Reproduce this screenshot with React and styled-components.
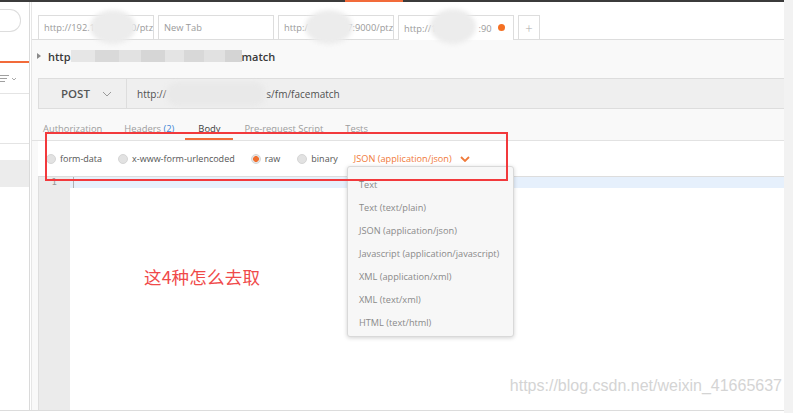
import React from 'react';
import styled, { createGlobalStyle } from 'styled-components';

const GlobalStyle = createGlobalStyle`
  html, body {
    margin: 0;
    padding: 0;
    background: #ffffff;
  }
  body {
    font-family: 'Open Sans', 'Noto Sans', sans-serif;
  }
`;

const ORANGE = '#f26b3a';

const Frame = styled.div`
  width: 793px;
  height: 413px;
  display: flex;
  overflow: hidden;
  background: #ffffff;
`;

const Window = styled.div`
  flex: 1;
  height: 410px;
  display: flex;
  flex-direction: column;
  border-bottom: 1px solid #dcdcdc;
`;

const TopStrip = styled.div`
  height: 2px;
  background: #3b3b3b;
  display: flex;
`;

const StripMark = styled.span`
  margin-left: 345px;
  width: 58px;
  background: ${ORANGE};
`;

const Columns = styled.div`
  flex: 1;
  display: flex;
  min-height: 0;
`;

const Scrollbar = styled.div`
  width: 9px;
  background: #f2f2f2;
`;

/* ---------- sidebar ---------- */

const Sidebar = styled.aside`
  width: 29px;
  border-right: 1px solid #dadada;
  margin-right: 1px;
  display: flex;
  flex-direction: column;
  background: #ffffff;
`;

const SearchPill = styled.div`
  margin-top: 7px;
  width: 20px;
  height: 21px;
  border: 1px solid #dddddd;
  border-left: none;
  border-radius: 0 11px 11px 0;
`;

const SideTabs = styled.div`
  height: 29px;
  border-bottom: 2px solid ${ORANGE};
`;

const SideFilter = styled.div`
  height: 30px;
  border-bottom: 1px solid #e4e4e4;
  display: flex;
  align-items: center;
`;

const SideBlock = styled.div`
  height: 49px;
  border-bottom: 1px solid #e4e4e4;
`;

const SideItem = styled.div`
  margin-top: 16px;
  height: 27px;
  background: ${(p) => (p.$selected ? '#ececec' : 'transparent')};
`;

/* ---------- main ---------- */

const Main = styled.main`
  flex: 1;
  display: flex;
  flex-direction: column;
  border-left: 1px solid #e6e6e6;
  background: #f9f9f9;
  min-width: 0;
`;

const TabBar = styled.div`
  position: relative;
  height: 38px;
  box-sizing: border-box;
  background: #ffffff;
  border-bottom: 1px solid #dddddd;
  display: flex;
  align-items: flex-end;
  gap: 4px;
  padding-left: 6px;
`;

const Tab = styled.div`
  position: relative;
  width: ${(p) => p.$w || 116}px;
  box-sizing: border-box;
  border: 1px solid #dddddd;
  border-bottom: none;
  background: #ffffff;
  margin-bottom: ${(p) => (p.$active ? '-1px' : '0')};
  height: ${(p) => (p.$active ? '25px' : '24px')};
  padding-left: ${(p) => (p.$center ? '0' : '5px')};
  display: flex;
  align-items: center;
  justify-content: ${(p) => (p.$center ? 'center' : 'flex-start')};
  font-size: 9.3px;
  color: #9a9a9a;
  white-space: nowrap;
  overflow: hidden;
`;

const Hidden = styled.span`
  display: inline-block;
  width: ${(p) => p.$w}px;
`;

const Dot = styled.span`
  position: absolute;
  right: 8px;
  top: 8px;
  width: 7px;
  height: 7px;
  border-radius: 50%;
  background: #f47023;
`;

const Plus = styled.span`
  font-size: 13px;
  color: #a8a8a8;
  font-weight: 300;
`;

const Smudge = styled.span`
  position: absolute;
  left: ${(p) => p.$x}px;
  top: ${(p) => p.$y}px;
  width: ${(p) => p.$w}px;
  height: ${(p) => p.$h}px;
  border-radius: 50%;
  background: #ececec;
  filter: blur(2px);
  z-index: 1;
`;

const Content = styled.div`
  position: relative;
  flex: 1;
  display: flex;
  flex-direction: column;
  min-height: 0;
`;

const TitleRow = styled.div`
  height: 38px;
  box-sizing: border-box;
  padding: 0 0 6px 5px;
  display: flex;
  align-items: center;
  font-size: 11px;
  font-weight: 600;
  color: #3a3a3a;
`;

const Caret = styled.span`
  width: 0;
  height: 0;
  border-top: 3px solid transparent;
  border-bottom: 3px solid transparent;
  border-left: 4px solid #8a8a8a;
  margin-right: 7px;
`;

const Pixelated = styled.span`
  display: inline-block;
  width: ${(p) => p.$w}px;
  height: 12px;
  background: linear-gradient(
    90deg,
    #e6e6e6 0 14%,
    #d9d9d9 14% 28%,
    #e2e2e2 28% 41%,
    #d6d6d6 41% 55%,
    #e4e4e4 55% 66%,
    #d8d8d8 66% 78%,
    #e1e1e1 78% 90%,
    #d4d4d4 90% 100%
  );
`;

const RequestBar = styled.div`
  margin-left: 6px;
  height: 31px;
  box-sizing: border-box;
  background: #efefef;
  border-top: 1px solid #dddddd;
  border-bottom: 1px solid #dddddd;
  border-left: 1px solid #dddddd;
  display: flex;
  align-items: stretch;
`;

const Method = styled.div`
  width: 88px;
  border-right: 1px solid #dddddd;
  display: flex;
  align-items: center;
  padding-left: 22px;
  box-sizing: border-box;
  gap: 12px;
  font-size: 11.5px;
  font-weight: 600;
  color: #555555;
`;

const Url = styled.div`
  display: flex;
  align-items: center;
  padding-left: 10px;
  font-size: 10px;
  color: #505050;
  white-space: nowrap;
`;

const UrlBlob = styled.span`
  display: inline-block;
  width: 100px;
  height: 24px;
  border-radius: 12px;
  background: #e9e9e9;
  filter: blur(2px);
`;

const SubTabs = styled.div`
  height: 32px;
  box-sizing: border-box;
  border-bottom: 1px solid #e2e2e2;
  display: flex;
`;

const SubTab = styled.div`
  padding: 13px ${(p) => (p.$active ? 13 : 11)}px 0;
  box-sizing: border-box;
  height: 31px;
  font-size: 9.4px;
  line-height: 13px;
  color: ${(p) => (p.$active ? '#404040' : '#9d9d9d')};
  border-bottom: 2px solid ${(p) => (p.$active ? ORANGE : 'transparent')};
  white-space: nowrap;
`;

const Count = styled.span`
  color: #3f86d6;
`;

const BodyArea = styled.div`
  position: relative;
  margin-left: 6px;
  flex: 1;
  display: flex;
  flex-direction: column;
  min-height: 0;
`;

const RadioRow = styled.div`
  height: 35px;
  background: #ffffff;
  display: flex;
  align-items: center;
  padding-left: 8px;
  font-size: 9px;
  color: #555555;
`;

const RadioOption = styled.label`
  display: flex;
  align-items: center;
  gap: 4px;
  margin-right: ${(p) => p.$gap}px;
  white-space: nowrap;
`;

const Radio = styled.span`
  width: 10px;
  height: 10px;
  box-sizing: border-box;
  border-radius: 50%;
  border: 1px solid #d6d6d6;
  background: ${(p) =>
    p.$checked
      ? `radial-gradient(circle, #f07030 0 2.6px, #e6e6e6 3.2px)`
      : '#e2e2e2'};
`;

const TypeSelect = styled.div`
  display: flex;
  align-items: center;
  gap: 8px;
  color: #f07a3a;
  font-size: 9.2px;
  white-space: nowrap;
`;

const Editor = styled.div`
  flex: 1;
  display: flex;
  border-top: 1px solid #dddddd;
  min-height: 0;
`;

const Gutter = styled.div`
  width: 32px;
  box-sizing: border-box;
  background: #ebebeb;
  border-left: 1px solid #dedede;
  font-size: 9px;
  color: #999999;
  text-align: right;
  padding-right: 13px;
  line-height: 11px;
  font-family: 'DejaVu Sans Mono', monospace;
`;

const Code = styled.div`
  position: relative;
  flex: 1;
  background: #ffffff;
  display: flex;
  flex-direction: column;
`;

const ActiveLine = styled.div`
  height: 11px;
  background: #e6f0fc;
  display: flex;
  align-items: center;
`;

const CursorBar = styled.span`
  margin-left: 3px;
  width: 1px;
  height: 11px;
  background: #b0b0b0;
`;

const Note = styled.div`
  margin: 76px 0 0 74px;
  font-family: 'Noto Sans CJK SC', sans-serif;
  font-size: 17.5px;
  color: #f04a4a;
  letter-spacing: 0.2px;
`;

const Watermark = styled.div`
  position: absolute;
  right: 2px;
  bottom: 15px;
  font-family: 'Liberation Sans', Arial, sans-serif;
  font-size: 16px;
  color: #d4d4d4;
  white-space: nowrap;
`;

const Dropdown = styled.ul`
  position: absolute;
  left: 309px;
  top: 25px;
  width: 165px;
  margin: 0;
  padding: 6px 0 2px;
  list-style: none;
  background: #f7f7f7;
  border: 1px solid #d9d9d9;
  border-radius: 3px;
  box-shadow: 0 1px 4px rgba(0, 0, 0, 0.18);
  z-index: 2;
`;

const Option = styled.li`
  height: 23px;
  line-height: 23px;
  padding-left: 11px;
  font-size: 9.2px;
  color: #8a8a8a;
  white-space: nowrap;
`;

const Annotation = styled.div`
  position: absolute;
  left: 13px;
  top: 92px;
  width: 463px;
  height: 49px;
  box-sizing: border-box;
  border: 2px solid #f2393c;
  z-index: 3;
  pointer-events: none;
`;

const Chevron = ({ color = '#9a9a9a', w = 10, h = 6, sw = 1 }) => (
  <svg width={w} height={h} viewBox="0 0 10 6">
    <path d="M1 1 L5 5 L9 1" fill="none" stroke={color} strokeWidth={sw} />
  </svg>
);

const SortIcon = () => (
  <svg width="17" height="9" viewBox="0 0 17 9">
    <path d="M0 1.5 H9 M0 4.5 H7 M0 7.5 H5" stroke="#a0a0a0" strokeWidth="1" />
    <path d="M12 4 L14 6 L16 4" fill="none" stroke="#a0a0a0" strokeWidth="0.9" />
  </svg>
);

const contentTypes = [
  'Text',
  'Text (text/plain)',
  'JSON (application/json)',
  'Javascript (application/javascript)',
  'XML (application/xml)',
  'XML (text/xml)',
  'HTML (text/html)',
];

const requestTabs = ['Authorization', 'Headers', 'Body', 'Pre-request Script', 'Tests'];

export default function App() {
  return (
    <>
      <GlobalStyle />
      <Frame>
        <Window>
          <TopStrip>
            <StripMark />
          </TopStrip>
          <Columns>
            <Sidebar>
              <SearchPill />
              <SideTabs />
              <SideFilter>
                <SortIcon />
              </SideFilter>
              <SideBlock />
              <SideItem $selected />
            </Sidebar>

            <Main>
              <TabBar>
                <Tab>
                  http://192.1<Hidden $w={45} />0/ptz
                </Tab>
                <Tab>New Tab</Tab>
                <Tab>
                  http:/<Hidden $w={45} />7:9000/ptz
                </Tab>
                <Tab $active>
                  http://1<Hidden $w={42} />:90
                  <Dot />
                </Tab>
                <Tab $w={22} $center>
                  <Plus>+</Plus>
                </Tab>
                <Smudge $x={58} $y={8} $w={46} $h={34} />
                <Smudge $x={273} $y={8} $w={48} $h={34} />
                <Smudge $x={398} $y={7} $w={46} $h={35} />
              </TabBar>

              <Content>
                <TitleRow>
                  <Caret />
                  http<Pixelated $w={171} />match
                </TitleRow>

                <RequestBar>
                  <Method>
                    POST
                    <Chevron />
                  </Method>
                  <Url>
                    http://<UrlBlob />s/fm/facematch
                  </Url>
                </RequestBar>

                <SubTabs>
                  {requestTabs.map((t) => (
                    <SubTab key={t} $active={t === 'Body'}>
                      {t}
                      {t === 'Headers' && <Count> (2)</Count>}
                    </SubTab>
                  ))}
                </SubTabs>

                <BodyArea>
                  <RadioRow>
                    <RadioOption $gap={16}>
                      <Radio />
                      form-data
                    </RadioOption>
                    <RadioOption $gap={16}>
                      <Radio />
                      x-www-form-urlencoded
                    </RadioOption>
                    <RadioOption $gap={17}>
                      <Radio $checked />
                      raw
                    </RadioOption>
                    <RadioOption $gap={16}>
                      <Radio />
                      binary
                    </RadioOption>
                    <TypeSelect>
                      JSON (application/json)
                      <Chevron color="#f07a3a" w={10} h={6} sw={1.8} />
                    </TypeSelect>
                  </RadioRow>

                  <Dropdown>
                    {contentTypes.map((c) => (
                      <Option key={c}>{c}</Option>
                    ))}
                  </Dropdown>

                  <Editor>
                    <Gutter>1</Gutter>
                    <Code>
                      <ActiveLine>
                        <CursorBar />
                      </ActiveLine>
                      <Note>这4种怎么去取</Note>
                      <Watermark>https://blog.csdn.net/weixin_41665637</Watermark>
                    </Code>
                  </Editor>
                </BodyArea>

                <Annotation />
              </Content>
            </Main>
          </Columns>
        </Window>
        <Scrollbar />
      </Frame>
    </>
  );
}
